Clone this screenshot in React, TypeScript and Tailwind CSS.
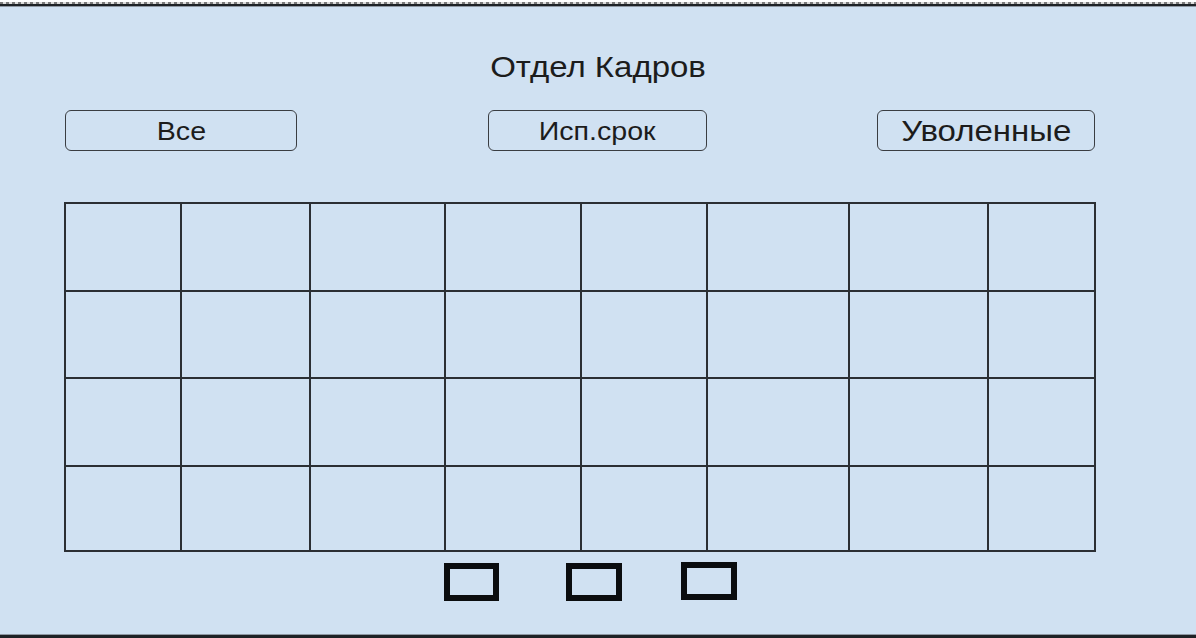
const COLS = [116, 129, 135, 136, 126, 142, 139, 107];
const ROWS = [88, 87, 88, 85];

// the mock-up is a little stretched sideways, so the text is widened to match
function Wide({ children }: { children: React.ReactNode }) {
  return <span className="inline-block scale-x-[1.1]">{children}</span>;
}

export default function App() {
  return (
    <div
      className="w-[1196px] h-[638px] flex flex-col bg-white text-[#1c1c1c]"
      style={{ fontFamily: '"Liberation Sans", Arial, sans-serif' }}
    >
      {/* window top edge */}
      <div className="h-[2px] shrink-0 bg-white" />
      <div className="h-[2px] shrink-0 bg-[repeating-linear-gradient(90deg,#7a7a7a_0px,#7a7a7a_3px,#dcdcdc_3px,#dcdcdc_6px)]" />
      <div className="h-[2px] shrink-0 bg-[#1e2226]" />
      <div className="h-px shrink-0 bg-[#8f98a3]" />

      <main className="flex-1 bg-[#d0e1f2] flex flex-col">
        <h1 className="mt-[45px] h-[30px] text-center text-[30px] leading-[30px]">
          <Wide>Отдел Кадров</Wide>
        </h1>

        <div className="mt-[28px] flex items-center pl-[65px]">
          <button className="w-[232px] h-[41px] rounded-[6px] border-[1.5px] border-[#3a3d42] text-[26px] leading-none">
            <Wide>Все</Wide>
          </button>
          <button className="ml-[191px] w-[219px] h-[41px] rounded-[6px] border-[1.5px] border-[#3a3d42] text-[26px] leading-none">
            <Wide>Исп.срок</Wide>
          </button>
          <button className="ml-[170px] w-[218px] h-[41px] rounded-[6px] border-[1.5px] border-[#3a3d42] text-[30px] leading-none">
            <Wide>Уволенные</Wide>
          </button>
        </div>

        <div className="mt-[51px] pl-[64px]">
          <table className="border-collapse">
            <tbody>
              {ROWS.map((h, r) => (
                <tr key={r} style={{ height: h }}>
                  {COLS.map((w, c) => (
                    <td
                      key={c}
                      className="border-2 border-[#2b2f34] p-0"
                      style={{ width: w }}
                    />
                  ))}
                </tr>
              ))}
            </tbody>
          </table>
        </div>

        <div className="mt-[11px] flex items-start pl-[444px]">
          <div className="w-[55px] h-[38px] border-[6px] border-[#0b0d0f]" />
          <div className="ml-[67px] w-[56px] h-[38px] border-[6px] border-[#0b0d0f]" />
          <div className="ml-[59px] -mt-px w-[56px] h-[38px] border-[6px] border-[#0b0d0f]" />
        </div>
      </main>

      <div className="h-px shrink-0 bg-[#8f98a3]" />
      <div className="h-[3px] shrink-0 bg-[#1e2226]" />
    </div>
  );
}
